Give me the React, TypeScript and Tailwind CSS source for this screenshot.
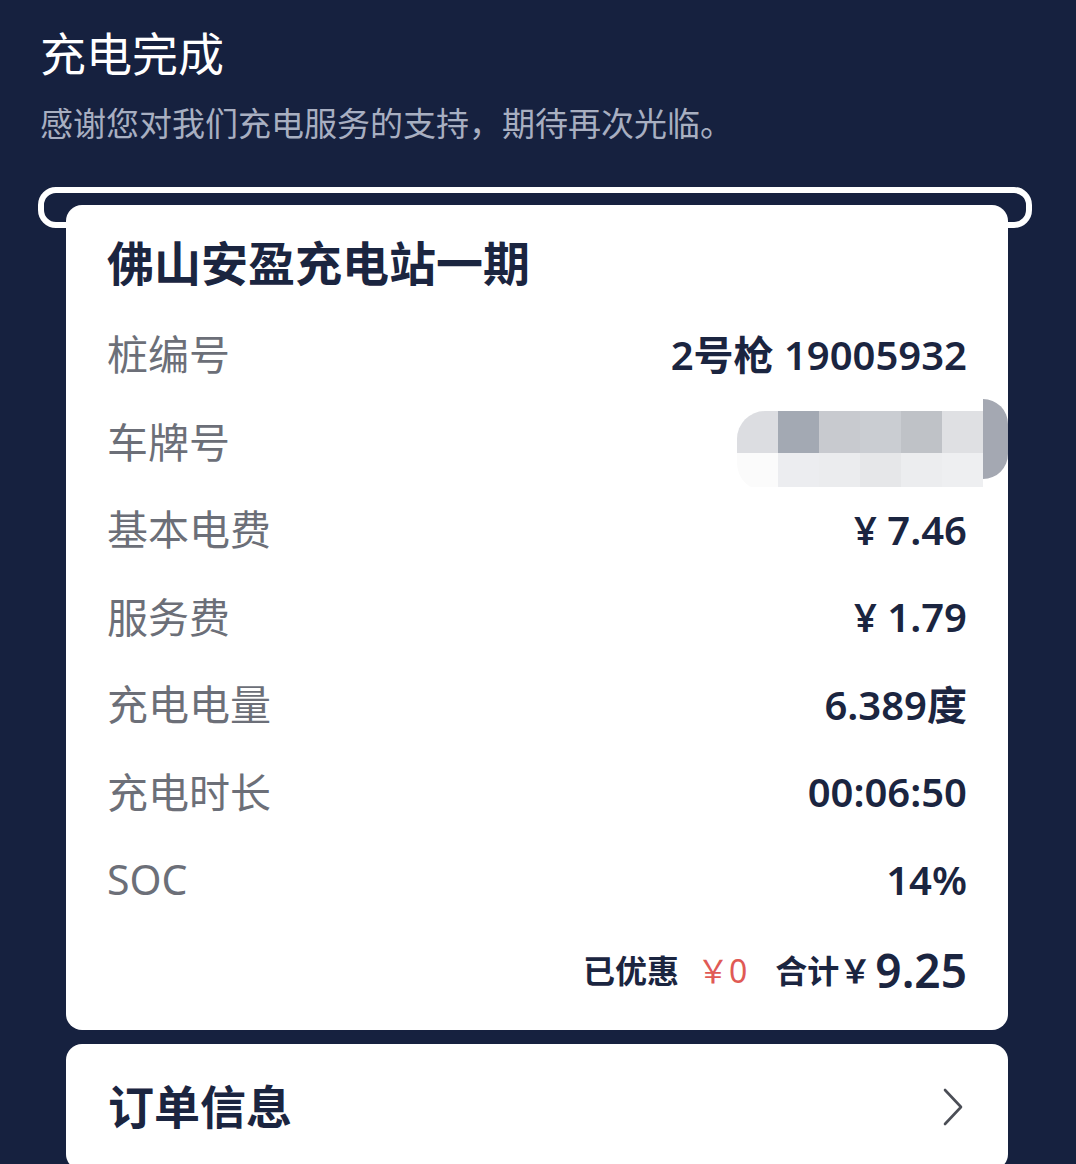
const font = { fontFamily: '"Noto Sans", "Noto Sans CJK SC", sans-serif' };

const rows = [
  { label: "桩编号", value: "2号枪 19005932" },
  { label: "车牌号", value: null },
  { label: "基本电费", value: "¥ 7.46" },
  { label: "服务费", value: "¥ 1.79" },
  { label: "充电电量", value: "6.389度" },
  { label: "充电时长", value: "00:06:50" },
  { label: "SOC", value: "14%" },
];

function Plate() {
  const top = ["#dcdde1", "#a3a9b3", "#c8cacf", "#cacdd2", "#bfc2c7", "#dfe0e3"];
  const bottom = ["#fbfbfb", "#ecedf0", "#ebecee", "#e6e7e9", "#ecedef", "#eeeff1"];
  return (
    <div className="-mr-[41px] mt-[18px] flex h-[80px] items-stretch">
      <div className="flex flex-col overflow-hidden rounded-l-[28px]">
        <div className="flex h-[42px]">
          {top.map((c, i) => (
            <div key={i} className="w-[41px]" style={{ backgroundColor: c }} />
          ))}
        </div>
        <div className="flex h-[34px]">
          {bottom.map((c, i) => (
            <div key={i} className="w-[41px]" style={{ backgroundColor: c }} />
          ))}
        </div>
      </div>
      <div className="h-[80px] w-[25px] -translate-y-[12px] rounded-r-[40px] bg-[#a4a8b2]" />
    </div>
  );
}

export default function App() {
  return (
    <div className="h-[1164px] overflow-hidden bg-[#16213f]" style={font}>
      <div className="pl-[40px] pt-[25px]">
        <h1 className="text-[46px] leading-[56px] font-normal text-white">充电完成</h1>
        <p className="mt-[23px] text-[33px] leading-[40px] text-[#a8afc1]">
          感谢您对我们充电服务的支持，期待再次光临。
        </p>
      </div>

      <div className="mt-[43px] ml-[38px] mr-[44px] h-[41px] rounded-[18px] border-[6px] border-white" />

      <div className="relative z-10 -mt-[23px] ml-[66px] mr-[68px] overflow-hidden rounded-[16px] bg-white px-[41px] pb-[24px] pt-[28px] text-[#1b2540]">
        <div className="text-[47px] leading-[60px] font-bold">佛山安盈充电站一期</div>
        <div className="mt-[18px]">
          {rows.map((r) => (
            <div key={r.label} className="flex h-[87.5px] items-center justify-between">
              <span className="text-[41px] text-[#6c6f78]">{r.label}</span>
              {r.value ? (
                <span className="text-[40px] font-semibold">{r.value}</span>
              ) : (
                <Plate />
              )}
            </div>
          ))}
        </div>
        <div className="mt-[12px] flex h-[70px] items-center justify-end">
          <span className="text-[32px] font-bold">已优惠</span>
          <span className="ml-[18px] text-[32px] text-[#e05a55]">￥0</span>
          <span className="ml-[28px] text-[32px] font-bold">合计￥</span>
          <span className="ml-[4px] text-[46px] font-semibold">9.25</span>
        </div>
      </div>

      <div className="mt-[14px] ml-[66px] mr-[68px] flex h-[126px] items-center justify-between rounded-[16px] bg-white pl-[42px] pr-[44px] text-[#1b2540]">
        <span className="text-[46px] font-bold">订单信息</span>
        <svg width="22" height="38" viewBox="0 0 22 38" fill="none">
          <polyline
            points="3,2 19,19 3,36"
            stroke="#4b4e56"
            strokeWidth="2.6"
            strokeLinecap="round"
            strokeLinejoin="round"
          />
        </svg>
      </div>
    </div>
  );
}
